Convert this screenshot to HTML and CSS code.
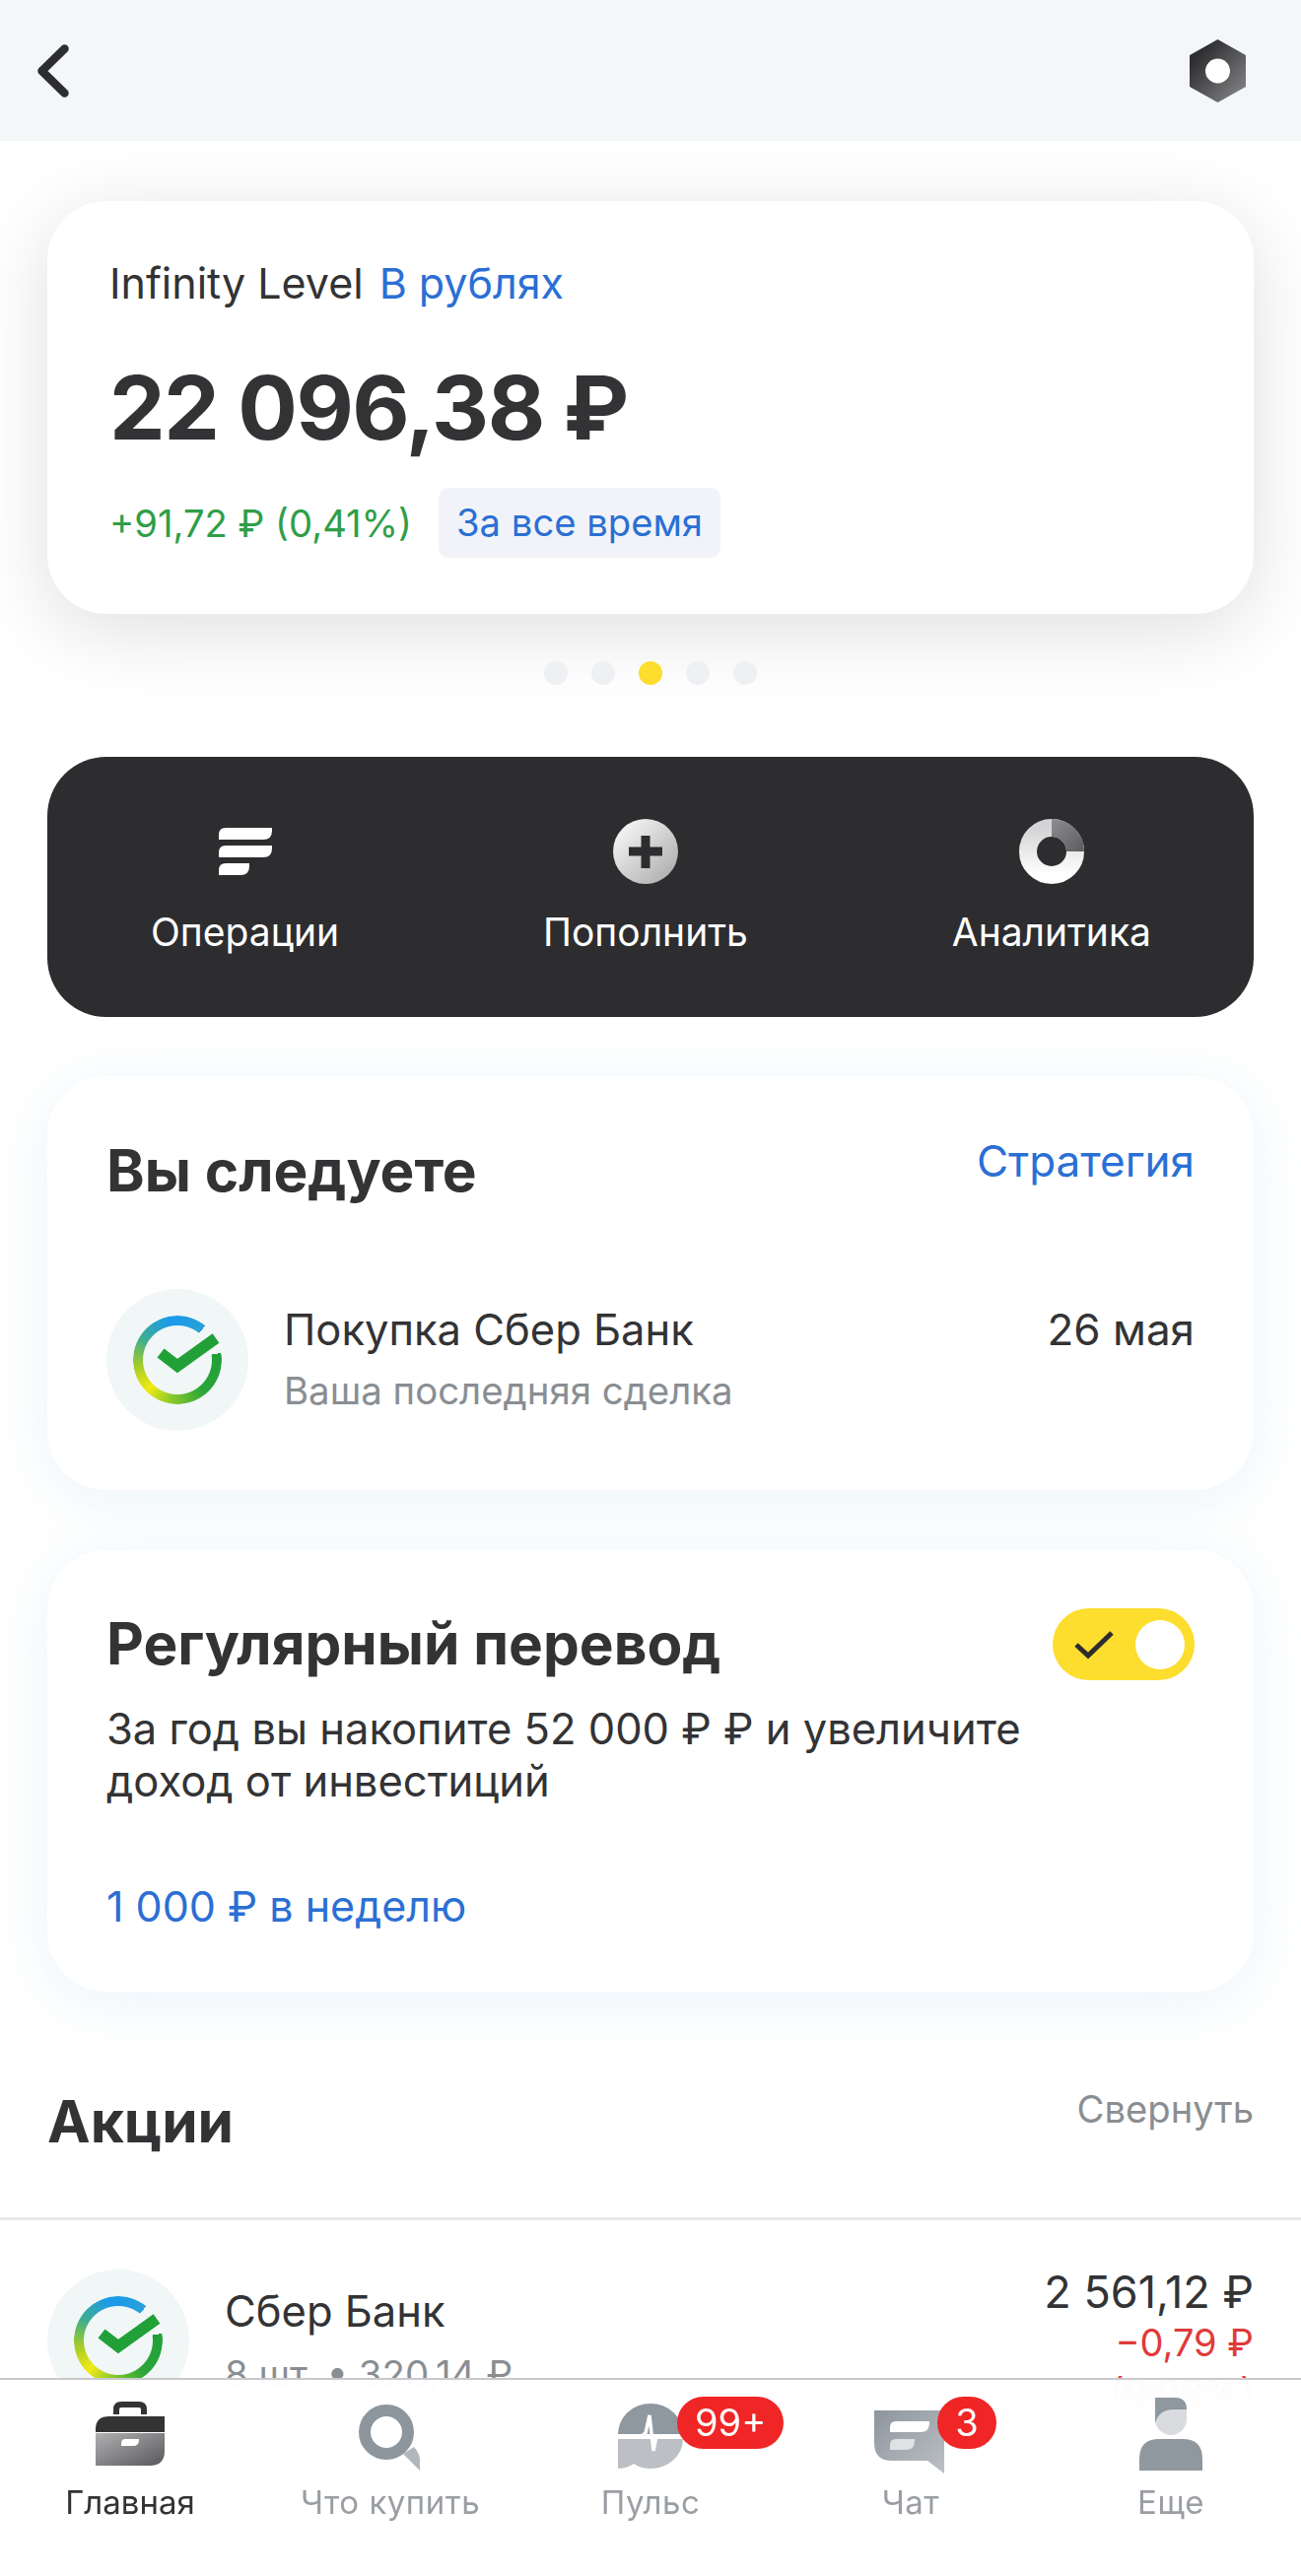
FILE: index.html
```html
<!DOCTYPE html>
<html lang="ru">
<head>
  <meta charset="UTF-8">
  <meta name="viewport" content="width=device-width, initial-scale=1">
  <title>Infinity Level</title>
  <link rel="stylesheet" href="styles.css">
</head>
<body>
  <div class="screen">
    <header class="topbar">
      <svg class="back" width="32" height="54" viewBox="0 0 32 54"><path d="M27.500 4.500 4.500 27l23 22.500" fill="none" stroke="#2d2d2f" stroke-width="8.500" stroke-linecap="round" stroke-linejoin="round"/></svg>
      <svg width="59" height="66" viewBox="0 0 59 66">
        <defs><linearGradient id="hexFill" x1="0" y1="0" x2="1" y2="1"><stop offset="0.2" stop-color="#2f2f31"/><stop offset="1" stop-color="#8c8c8e"/></linearGradient></defs>
        <path d="M29.500 1 58 17v32L29.500 65 1 49V17z" fill="url(#hexFill)"/>
        <circle cx="29.500" cy="33" r="12.500" fill="#fff"/>
      </svg>
    </header>

    <main>
      <section class="card balance">
        <div class="balance-title"><span>Infinity Level</span><span class="link">В рублях</span></div>
        <div class="amount">22 096,38 ₽</div>
        <div class="balance-change">
          <span class="green">+91,72 ₽ (0,41%)</span>
          <span class="chip">За все время</span>
        </div>
      </section>

      <div class="dots">
        <span class="dot"></span><span class="dot"></span><span class="dot active"></span><span class="dot"></span><span class="dot"></span>
      </div>

      <nav class="actions">
        <div class="action">
          <div class="action-icon">
            <svg width="54" height="48" viewBox="0 0 54 48" fill="#fff">
              <path d="M7 0h47v3q0 9-9 9H0V7q0-7 7-7z"/>
              <path d="M7 18h47v3q0 9-9 9H0v-5q0-7 7-7z"/>
              <path d="M7 36h24v3q0 9-9 9H0v-5q0-7 7-7z"/>
            </svg>
          </div>
          <span>Операции</span>
        </div>
        <div class="action">
          <div class="action-icon">
            <svg width="66" height="66" viewBox="0 0 66 66">
              <defs><linearGradient id="plusFill" x1="0" y1="0" x2="1" y2="1"><stop offset="0.1" stop-color="#f6f6f6"/><stop offset="1" stop-color="#a6a6a8"/></linearGradient></defs>
              <circle cx="33" cy="33" r="33" fill="url(#plusFill)"/>
              <path d="M28.500 17h9v11.500H50v9H37.500V50h-9V37.500H16v-9h12.500z" fill="#2d2d2f"/>
            </svg>
          </div>
          <span>Пополнить</span>
        </div>
        <div class="action">
          <div class="action-icon">
            <svg width="66" height="66" viewBox="0 0 66 66">
              <defs>
                <linearGradient id="donutFill" x1="0" y1="0" x2="0" y2="1"><stop offset="0" stop-color="#d4d4d6"/><stop offset="1" stop-color="#fff"/></linearGradient>
                <linearGradient id="donutPart" x1="0" y1="0" x2="1" y2="1"><stop offset="0" stop-color="#8e8e90"/><stop offset="1" stop-color="#5c5c5e"/></linearGradient>
              </defs>
              <circle cx="33" cy="33" r="24" fill="none" stroke="url(#donutFill)" stroke-width="18"/>
              <path d="M33 0a33 33 0 0 1 33 33H48a15 15 0 0 0-15-15z" fill="url(#donutPart)"/>
            </svg>
          </div>
          <span>Аналитика</span>
        </div>
      </nav>

      <section class="card following">
        <div class="card-head">
          <h2>Вы следуете</h2>
          <span class="link strategy">Стратегия</span>
        </div>
        <div class="deal">
          <div class="logo">
            <div class="logo-ring"></div>
            <svg class="logo-check" width="144" height="144" viewBox="0 0 144 144"><path d="M55 65 72 78l39-28" fill="none" stroke="#21a038" stroke-width="11.500"/></svg>
          </div>
          <div class="deal-text">
            <div class="deal-name">Покупка Сбер Банк</div>
            <div class="muted">Ваша последняя сделка</div>
          </div>
          <div class="deal-date">26 мая</div>
        </div>
      </section>

      <section class="card transfer">
        <div class="card-head">
          <h2 class="transfer-title">Регулярный перевод</h2>
          <div class="toggle">
            <svg width="42" height="30" viewBox="0 0 42 30"><path d="M3 15l12 11L39 3" fill="none" stroke="#2d2d2f" stroke-width="5"/></svg>
            <span class="knob"></span>
          </div>
        </div>
        <p class="transfer-desc">За год вы накопите 52 000 ₽ ₽ и увеличите<br>доход от инвестиций</p>
        <div class="link transfer-sum">1 000 ₽ в неделю</div>
      </section>

      <div class="section-head">
        <h2>Акции</h2>
        <span class="collapse">Свернуть</span>
      </div>

      <div class="stock">
        <div class="logo">
          <div class="logo-ring"></div>
          <svg class="logo-check" width="144" height="144" viewBox="0 0 144 144"><path d="M55 65 72 78l39-28" fill="none" stroke="#21a038" stroke-width="11.500"/></svg>
        </div>
        <div class="stock-text">
          <div class="deal-name">Сбер Банк</div>
          <div class="muted stock-sub">8 шт. • 320,14 ₽</div>
        </div>
        <div class="stock-price">
          <div class="price">2 561,12 ₽</div>
          <div class="red">−0,79 ₽</div>
          <div class="red">(0,03%)</div>
        </div>
      </div>
    </main>

    <footer class="tabbar">
      <div class="tab current">
        <svg width="80" height="80" viewBox="0 0 80 80">
          <defs><linearGradient id="caseFill" x1="0" y1="0" x2="1" y2="1"><stop offset="0" stop-color="#b0b0b2"/><stop offset="1" stop-color="#58585a"/></linearGradient></defs>
          <g transform="translate(5 5)">
            <path d="M21 13V8q0-5 5-5h18q5 0 5 5v5" fill="none" stroke="#333" stroke-width="6"/>
            <path d="M0 31v-3q0-13 14-13h56v16z" fill="#333"/>
            <path d="M0 32h70v18q0 15-15 15H0z" fill="url(#caseFill)"/>
            <path d="M30 38h14v1q0 6-6 6H26v-2q0-5 4-5z" fill="#fff"/>
          </g>
        </svg>
        <span>Главная</span>
      </div>
      <div class="tab">
        <svg width="80" height="80" viewBox="0 0 80 80">
          <g transform="translate(8 8)">
            <path d="M45 50l11-7q6 7 6 13v11z" fill="#b1b6bb"/>
            <circle cx="28" cy="28" r="22" fill="none" stroke="#8d959d" stroke-width="12"/>
          </g>
        </svg>
        <span>Что купить</span>
      </div>
      <div class="tab">
        <svg width="80" height="80" viewBox="0 0 80 80">
          <g transform="translate(7 7)">
            <path d="M0 31a33 31 0 0 1 66 0z" fill="#8f979f"/>
            <path d="M0 36h66a33 30 0 0 1-33 30q-10 0-17-5-7 5-16 5z" fill="#bcc0c5"/>
            <path d="M0 33h24l4-3 4-18 4 36 3-15h27" fill="none" stroke="#fff" stroke-width="3.500"/>
          </g>
        </svg>
        <span>Пульс</span>
        <span class="badge">99+</span>
      </div>
      <div class="tab">
        <svg width="80" height="80" viewBox="0 0 80 80">
          <defs><linearGradient id="chatFill" x1="0" y1="0" x2="1" y2="1"><stop offset="0" stop-color="#8d959d"/><stop offset="1" stop-color="#bcc0c5"/></linearGradient></defs>
          <g transform="translate(3 14)">
            <path d="M0 0h71v64L54 51H18Q0 51 0 33z" fill="url(#chatFill)"/>
            <path d="M22 11h34v2q0 9-9 9H16v-5q0-6 6-6z" fill="#fff"/>
            <path d="M22 29h19v2q0 9-9 9H16v-5q0-6 6-6z" fill="#dfe2e5"/>
          </g>
        </svg>
        <span>Чат</span>
        <span class="badge">3</span>
      </div>
      <div class="tab">
        <svg width="80" height="80" viewBox="0 0 80 80">
          <g transform="translate(8 1)">
            <path d="M16 0h20q12 0 12 12v10a16 16 0 0 1-32 0z" fill="#d9dbdf"/>
            <path d="M16 0h20q12 0 12 12H34q-14 0-18 14z" fill="#8f979f"/>
            <path d="M0 74V62q0-20 20-20h24q20 0 20 20v12z" fill="#8f979f"/>
          </g>
        </svg>
        <span>Еще</span>
      </div>
    </footer>
  </div>
</body>
</html>
```

FILE: styles.css
```css
:root {
  --text: #333335;
  --muted: #8a8e92;
  --blue: #2b6fd4;
  --green: #2f9e48;
  --red: #e03a3a;
  --yellow: #fddd2e;
  --dark: #2d2d2f;
  --radius: 60px;
}

* {
  box-sizing: border-box;
}

body {
  margin: 0;
  background: #fff;
  color: var(--text);
  font-family: Inter, "Noto Sans", sans-serif;
  font-size: 43.500px;
  line-height: 54px;
}

.screen {
  position: relative;
  height: 100vh;
  overflow: hidden;
}

h2 {
  margin: 0;
  font-size: 58.500px;
  line-height: 70px;
  font-weight: 700;
}

p {
  margin: 0;
}

.link {
  color: var(--blue);
}

.muted {
  color: var(--muted);
  font-size: 38.400px;
  line-height: 48px;
}

.topbar {
  display: flex;
  justify-content: space-between;
  align-items: center;
  height: 143px;
  padding: 0 55px 0 38px;
  background: #f3f7f8;
}

.card {
  margin: 0 48px;
  background: #fff;
  border-radius: var(--radius);
}

.balance {
  margin-top: 61px;
  padding: 56px 63px 57px;
  box-shadow: 0 16px 80px rgba(0, 0, 0, 0.13);
}

.balance-title {
  display: flex;
  gap: 16px;
  font-size: 43px;
}

.amount {
  margin-top: 50px;
  font-size: 90px;
  line-height: 100px;
  font-weight: 700;
  letter-spacing: -1.500px;
}

.balance-change {
  display: flex;
  align-items: center;
  gap: 27px;
  margin-top: 31px;
  font-size: 38.200px;
}

.green {
  color: var(--green);
}

.chip {
  height: 71px;
  padding: 0 18px;
  border-radius: 10px;
  background: #f1f3f8;
  color: var(--blue);
  line-height: 71px;
}

.dots {
  display: flex;
  justify-content: center;
  gap: 24px;
  margin-top: 48px;
}

.dot {
  width: 24px;
  height: 24px;
  border-radius: 50%;
  background: #eef0f3;
}

.dot.active {
  background: var(--yellow);
}

.actions {
  display: flex;
  justify-content: space-between;
  height: 264px;
  margin: 73px 48px 0;
  padding: 63px 104px 0 105px;
  background: var(--dark);
  border-radius: var(--radius);
  color: #fff;
  font-size: 39px;
  line-height: 48px;
}

.action {
  display: flex;
  flex-direction: column;
  align-items: center;
  gap: 25px;
}

.action-icon {
  display: flex;
  align-items: center;
  height: 66px;
}

.following {
  margin-top: 60px;
  padding: 61px 60px 60px;
  box-shadow: 0 10px 60px rgba(170, 210, 235, 0.24);
}

.card-head {
  display: flex;
  justify-content: space-between;
  align-items: flex-start;
}

.strategy {
  margin-top: -2px;
  font-size: 44px;
}

.deal {
  display: flex;
  align-items: center;
  gap: 36px;
  margin-top: 85px;
}

.deal-text {
  flex: 1;
  padding-bottom: 3px;
}

.deal-name {
  margin-bottom: 11px;
}

.deal-date {
  align-self: flex-start;
  margin-top: 14px;
  font-size: 44px;
}

.logo {
  display: grid;
  flex: none;
  place-items: center;
  width: 144px;
  height: 144px;
  border-radius: 50%;
  background: #f1f6f7;
}

.logo-ring,
.logo-check {
  grid-area: 1 / 1;
}

.logo-ring {
  width: 90px;
  height: 90px;
  border-radius: 50%;
  background: conic-gradient(#1d9be8 0deg, #2aa0d8 39deg, transparent 39deg, transparent 81deg, #21a038 81deg, #2aa53a 140deg, #8ccb2c 190deg, #f2e913 225deg, #a2cc28 262deg, #3fae8c 300deg, #1d9be8 345deg, #1d9be8 360deg);
  -webkit-mask: radial-gradient(circle, transparent 34.500px, #000 35.500px);
  mask: radial-gradient(circle, transparent 34.500px, #000 35.500px);
}

.transfer {
  margin-top: 61px;
  padding: 59px 60px 60px;
  box-shadow: 0 10px 60px rgba(170, 210, 235, 0.24);
}

.transfer-title {
  margin-top: 1px;
}

.toggle {
  display: flex;
  justify-content: space-between;
  align-items: center;
  width: 144px;
  height: 73px;
  padding: 0 10px 0 21px;
  border-radius: 37px;
  background: var(--yellow);
}

.knob {
  width: 50px;
  height: 50px;
  border-radius: 50%;
  background: #fff;
}

.transfer-desc {
  margin-top: 23px;
  line-height: 53px;
}

.transfer-sum {
  margin-top: 73px;
  font-size: 43px;
}

.section-head {
  display: flex;
  justify-content: space-between;
  align-items: flex-start;
  margin-top: 97px;
  padding: 0 48px;
}

.collapse {
  margin-top: -2px;
  color: var(--muted);
  font-size: 38.200px;
  line-height: 48px;
}

.stock {
  display: flex;
  gap: 36px;
  margin-top: 62px;
  padding: 50px 48px 0;
  border-top: 3px solid #e8e8ea;
}

.stock-text {
  flex: 1;
  padding-top: 15px;
}

.stock-sub {
  margin-top: 13px;
}

.stock-price {
  margin-top: -3px;
  text-align: right;
  font-size: 45px;
  line-height: 52px;
}

.red {
  color: var(--red);
  font-size: 38px;
  line-height: 51px;
}

.tabbar {
  position: absolute;
  left: 0;
  right: 0;
  bottom: 0;
  display: grid;
  grid-template-columns: repeat(5, 1fr);
  height: 201px;
  padding-top: 17px;
  border-top: 2px solid #c9c9cd;
  background: rgba(255, 255, 255, 0.95);
  backdrop-filter: blur(24px);
  color: #9a9ea3;
  font-size: 33px;
  line-height: 40px;
  letter-spacing: 0.500px;
}

.tab {
  position: relative;
  display: flex;
  flex-direction: column;
  align-items: center;
  gap: 7px;
}

.tab.current {
  color: var(--text);
  letter-spacing: 0;
}

.badge {
  position: absolute;
  top: 0;
  left: 159px;
  min-width: 60px;
  height: 53px;
  padding: 0 18px;
  border-radius: 27px;
  background: #f02525;
  color: #fff;
  font-size: 38px;
  line-height: 53px;
  letter-spacing: 0;
  text-align: center;
}

.tab:nth-child(4) .badge {
  padding: 0;
}
```
